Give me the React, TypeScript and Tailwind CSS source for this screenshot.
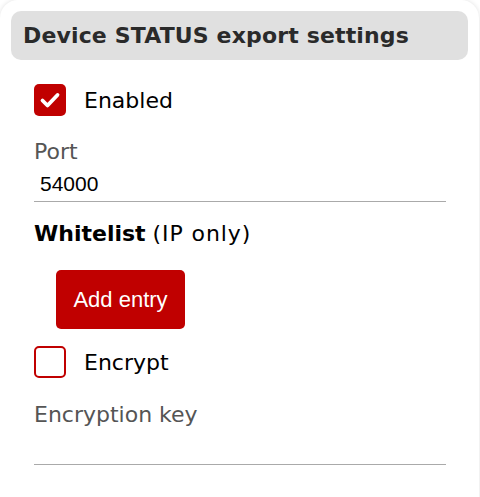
import React, { useState } from 'react';

function Checkbox({ checked, onChange, label }: { checked: boolean; onChange: () => void; label: string }) {
  return (
    <label className="flex items-center gap-[18px] cursor-pointer h-[32px]">
      <button
        type="button"
        onClick={onChange}
        className={
          checked
            ? "w-[32px] h-[32px] rounded-[5px] bg-[#c00000] flex items-center justify-center"
            : "w-[32px] h-[32px] rounded-[5px] border-2 border-[#c00000] bg-white"
        }
      >
        {checked && (
          <svg width="24" height="24" viewBox="0 0 24 24" fill="none">
            <path d="M4.5 12.5l5 5 10-10.5" stroke="white" strokeWidth="3.8" strokeLinecap="round" strokeLinejoin="round" />
          </svg>
        )}
      </button>
      <span className="text-[22px] text-black font-['DejaVu_Sans',sans-serif]">{label}</span>
    </label>
  );
}

export default function App() {
  const [enabled, setEnabled] = useState(true);
  const [encrypt, setEncrypt] = useState(false);
  const [port, setPort] = useState('54000');
  const [key, setKey] = useState('');

  return (
    <div className="w-[480px] h-[497px] overflow-hidden bg-white">
      <div className="w-[479px] h-[520px] rounded-[18px] bg-white shadow-[0_0_5px_rgba(0,0,0,0.12)] p-[11px]">
        <div className="h-[49px] rounded-[10px] bg-[#e0e0e0] flex items-center px-[12px]">
          <h2 className="text-[22px] font-bold text-[#2a2a2a] font-['DejaVu_Sans',sans-serif] tracking-[0.15px]">
            Device STATUS export settings
          </h2>
        </div>

        <div className="px-[23px]">
          <div className="mt-[24px]">
            <Checkbox checked={enabled} onChange={() => setEnabled(!enabled)} label="Enabled" />
          </div>

          <div className="mt-[23px]">
            <div className="text-[22px] leading-[26px] text-[#555] font-['DejaVu_Sans',sans-serif]">Port</div>
            <input
              value={port}
              onChange={(e) => setPort(e.target.value)}
              className="w-[412px] h-[37px] pl-[6px] pt-[2px] text-[21px] text-black font-['Liberation_Sans',sans-serif] border-b border-[#aaa] outline-none bg-transparent"
            />
          </div>

          <div className="mt-[17px] text-[22px] leading-[30px] text-black font-['DejaVu_Sans',sans-serif]">
            <span className="font-bold">Whitelist</span> <span className="tracking-[0.9px]">(IP only)</span>
          </div>

          <button className="mt-[21px] ml-[22px] w-[129px] h-[59px] rounded-[5px] bg-[#c00000] text-white text-[22px] font-['Liberation_Sans',sans-serif]">
            Add entry
          </button>

          <div className="mt-[17px]">
            <Checkbox checked={encrypt} onChange={() => setEncrypt(!encrypt)} label="Encrypt" />
          </div>

          <div className="mt-[22px]">
            <div className="text-[22px] leading-[30px] text-[#555] font-['DejaVu_Sans',sans-serif]">Encryption key</div>
            <input
              value={key}
              onChange={(e) => setKey(e.target.value)}
              className="w-[412px] h-[35px] pl-[6px] text-[21px] text-black font-['Liberation_Sans',sans-serif] border-b border-[#aaa] outline-none bg-transparent"
            />
          </div>
        </div>
      </div>
    </div>
  );
}
